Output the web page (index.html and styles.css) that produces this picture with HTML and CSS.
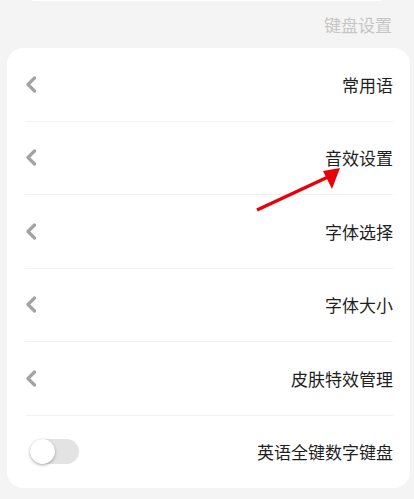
FILE: index.html
```html
<!DOCTYPE html>
<html lang="zh-CN">
<head>
<meta charset="utf-8">
<link rel="stylesheet" href="styles.css">
</head>
<body>
<div class="page">
  <div class="topcap"></div>
  <div class="header">键盘设置</div>
  <div class="card">
    <div class="row"><svg class="chev" viewBox="0 0 12 17" width="12" height="17"><polyline points="9.5,2 3,8.5 9.5,15"/></svg><span class="label">常用语</span></div>
    <div class="row"><svg class="chev" viewBox="0 0 12 17" width="12" height="17"><polyline points="9.5,2 3,8.5 9.5,15"/></svg><span class="label">音效设置</span></div>
    <div class="row"><svg class="chev" viewBox="0 0 12 17" width="12" height="17"><polyline points="9.5,2 3,8.5 9.5,15"/></svg><span class="label">字体选择</span></div>
    <div class="row"><svg class="chev" viewBox="0 0 12 17" width="12" height="17"><polyline points="9.5,2 3,8.5 9.5,15"/></svg><span class="label">字体大小</span></div>
    <div class="row"><svg class="chev" viewBox="0 0 12 17" width="12" height="17"><polyline points="9.5,2 3,8.5 9.5,15"/></svg><span class="label">皮肤特效管理</span></div>
    <div class="row last"><div class="toggle"><div class="knob"></div></div><span class="label">英语全键数字键盘</span></div>
  </div>
  <svg class="arrow" viewBox="0 0 414 499" width="414" height="499">
    <line x1="257" y1="210" x2="328" y2="177"/>
    <polygon points="340,168 323,171 332,189"/>
  </svg>
</div>
</body>
</html>
```
FILE: styles.css
```css
html, body {
  margin: 0;
  padding: 0;
  background: #f4f4f4;
}
.page {
  position: relative;
  width: 414px;
  height: 499px;
  overflow: hidden;
  font-family: "Noto Sans CJK SC", "Noto Sans", sans-serif;
}
.topcap {
  position: absolute;
  left: 20px;
  right: 20px;
  top: -20px;
  height: 21px;
  background: #fff;
  border-radius: 0 0 16px 16px;
}
.header {
  height: 48px;
  display: flex;
  align-items: center;
  justify-content: flex-end;
  padding-right: 22px;
  font-size: 17px;
  color: #c6c6c6;
}
.card {
  margin-left: 7px;
  width: 403px;
  height: 440px;
  background: #fff;
  border-radius: 16px;
  display: flex;
  flex-direction: column;
}
.row {
  flex: 1;
  margin: 0 17px 0 18px;
  display: flex;
  align-items: center;
  justify-content: space-between;
  border-bottom: 1px solid #f1f1f1;
}
.row.last {
  border-bottom: none;
}
.chev {
  display: block;
  fill: none;
  stroke: #a3a3a3;
  stroke-width: 3.2;
  stroke-linecap: round;
  stroke-linejoin: round;
}
.label {
  font-size: 17px;
  color: #1f1f1f;
}
.toggle {
  margin-left: 5px;
  width: 49px;
  height: 25px;
  border-radius: 13px;
  background: #e3e3e3;
  display: flex;
  align-items: center;
}
.knob {
  width: 25px;
  height: 25px;
  border-radius: 50%;
  background: #fff;
  box-shadow: 0 1px 3px rgba(0,0,0,0.35);
}
.arrow {
  position: absolute;
  left: 0;
  top: 0;
  pointer-events: none;
}
.arrow line {
  stroke: #e8000b;
  stroke-width: 3.5;
}
.arrow polygon {
  fill: #e8000b;
}
```
